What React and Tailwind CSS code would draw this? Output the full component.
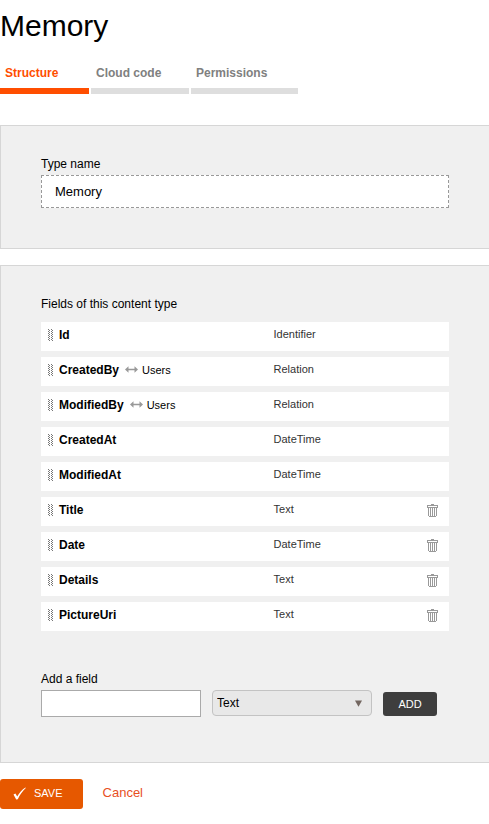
import React, { useState } from "react";

const TABS = [
  { label: "Structure", width: "w-[89px]" },
  { label: "Cloud code", width: "w-[98px]" },
  { label: "Permissions", width: "w-[107px]" },
];
const FIELD_TYPES = ["Text", "Number", "Boolean", "DateTime", "Relation"];

const INITIAL_FIELDS = [
  { name: "Id", type: "Identifier" },
  { name: "CreatedBy", type: "Relation", relation: "Users" },
  { name: "ModifiedBy", type: "Relation", relation: "Users" },
  { name: "CreatedAt", type: "DateTime" },
  { name: "ModifiedAt", type: "DateTime" },
  { name: "Title", type: "Text", removable: true },
  { name: "Date", type: "DateTime", removable: true },
  { name: "Details", type: "Text", removable: true },
  { name: "PictureUri", type: "Text", removable: true },
];

const GRIP_ROWS = [0, 2, 4, 6, 8, 10];

function GripIcon() {
  return (
    <svg width="6" height="12" viewBox="0 0 6 12" fill="#777" shapeRendering="crispEdges" aria-hidden="true">
      {GRIP_ROWS.map((y) => (
        <path key={y} d={`M0 ${y}h1v1h-1zM3 ${y}h1v1h-1zM1 ${y + 1}h1v1h-1zM4 ${y + 1}h1v1h-1z`} />
      ))}
    </svg>
  );
}

function RelationIcon() {
  return (
    <svg width="13" height="7" viewBox="0 0 13 7" fill="#999" aria-hidden="true">
      <path d="M0 3.5L3.5 0.3V2.8H9.5V0.3L13 3.5L9.5 6.7V4.2H3.5V6.7Z" />
    </svg>
  );
}

function TrashIcon() {
  return (
    <svg width="11" height="13" viewBox="0 0 11 13" fill="#999" shapeRendering="crispEdges" aria-hidden="true">
      <path d="M4 0h3v1h-3zM0 1h11v1h-11zM0 2h1v1h-1zM10 2h1v1h-1zM0 3h11v1h-11z" />
      <path d="M1 4h1v8h-1zM3 4h1v8h-1zM5 4h1v8h-1zM7 4h1v8h-1zM9 4h1v8h-1zM2 12h7v1h-7z" />
    </svg>
  );
}

function CheckIcon() {
  return (
    <svg width="13" height="13" viewBox="0 0 13 13" fill="#fff" aria-hidden="true">
      <path d="M0.5 7.6L2.4 6.6L4.2 9.6C6.2 5.8 9 2.4 12.4 0.4L12.8 0.9C9.4 4 6.8 7.8 4.8 12.2L3.2 12.4Z" />
    </svg>
  );
}

export default function App() {
  const [tab, setTab] = useState("Structure");
  const [typeName, setTypeName] = useState("Memory");
  const [fields, setFields] = useState(INITIAL_FIELDS);
  const [newName, setNewName] = useState("");
  const [newType, setNewType] = useState("Text");

  function handleAdd() {
    if (!newName.trim()) return;
    setFields([...fields, { name: newName.trim(), type: newType, removable: true }]);
    setNewName("");
  }

  function handleRemove(name) {
    setFields(fields.filter((f) => f.name !== name));
  }

  return (
    <main className="bg-white pt-2 pb-4 font-['Liberation_Sans',Arial,sans-serif] text-xs text-black">
      <h1 className="text-[30px] leading-9">Memory</h1>

      <nav className="mt-[21px] flex gap-0.5">
        {TABS.map(({ label, width }) => (
          <button
            key={label}
            onClick={() => setTab(label)}
            className={`${width} border-b-6 pb-[7px] pl-[5px] text-left font-bold ${
              label === tab ? "border-[#ff4e00] text-[#ff4e00]" : "border-[#dedede] text-[#808080]"
            }`}
          >
            {label}
          </button>
        ))}
      </nav>

      <section className="mt-[31px] border-y border-l border-[#d6d6d6] bg-[#f0f0f0] px-10 pt-[30px] pb-10">
        <label htmlFor="type-name" className="block">Type name</label>
        <input
          id="type-name"
          type="text"
          value={typeName}
          onChange={(e) => setTypeName(e.target.value)}
          className="mt-[3px] block h-[33px] w-full border border-dashed border-[#999] bg-white px-[13px] text-[13px] outline-none"
        />
      </section>

      <section className="mt-4 border-y border-l border-[#d6d6d6] bg-[#f0f0f0] px-10 pt-[30px] pb-[45px]">
        <h2>Fields of this content type</h2>

        <table className="mt-1 w-full table-fixed border-separate border-spacing-x-0 border-spacing-y-1.5">
          <colgroup>
            <col className="w-[57%]" />
            <col />
            <col className="w-12" />
          </colgroup>
          <tbody>
            {fields.map((f) => (
              <tr key={f.name} className="h-[29px] bg-white">
                <td className="pb-1 pl-[7px]">
                  <div className="flex items-center">
                    <GripIcon />
                    <span className="ml-[5px] font-bold">{f.name}</span>
                    {f.relation && (
                      <span className="ml-1.5 flex items-center gap-1 text-[11px] leading-4">
                        <RelationIcon />
                        {f.relation}
                      </span>
                    )}
                  </div>
                </td>
                <td className="pb-1.5 text-[11px] leading-4 text-[#333]">{f.type}</td>
                <td className="pr-[11px] pb-0.5">
                  {f.removable && (
                    <button
                      aria-label={`Remove ${f.name}`}
                      onClick={() => handleRemove(f.name)}
                      className="ml-auto block"
                    >
                      <TrashIcon />
                    </button>
                  )}
                </td>
              </tr>
            ))}
          </tbody>
        </table>

        <label htmlFor="field-name" className="mt-[34px] block">Add a field</label>
        <div className="mt-[3px] flex items-start">
          <input
            id="field-name"
            type="text"
            value={newName}
            onChange={(e) => setNewName(e.target.value)}
            className="h-[27px] w-40 border border-[#aaa] bg-white px-1.5 outline-none"
          />
          <div className="relative ml-[11px]">
            <select
              aria-label="Field type"
              value={newType}
              onChange={(e) => setNewType(e.target.value)}
              className="block h-[26px] w-40 appearance-none rounded border border-[#c3c3c3] bg-[#e8e8e8] px-1 outline-none"
            >
              {FIELD_TYPES.map((t) => <option key={t} value={t}>{t}</option>)}
            </select>
            <svg
              className="pointer-events-none absolute top-2.5 right-2.5"
              width="7" height="7" viewBox="0 0 7 7" fill="#736660" aria-hidden="true"
            >
              <path d="M0 0.5H7L3.5 6.8Z" />
            </svg>
          </div>
          <button
            onClick={handleAdd}
            className="mt-0.5 ml-[11px] h-6 w-[54px] rounded-[3px] bg-[#3e3e3e] text-[11px] text-white"
          >
            ADD
          </button>
        </div>
      </section>

      <div className="mt-4 flex items-center gap-5">
        <button className="flex h-[30px] items-center gap-2 rounded-[3px] bg-[#e65800] pr-5 pb-0.5 pl-[13px] text-[11px] text-white">
          <CheckIcon />
          SAVE
        </button>
        <a href="#" className="pb-0.5 text-[13px] text-[#e8501f]">Cancel</a>
      </div>
    </main>
  );
}
